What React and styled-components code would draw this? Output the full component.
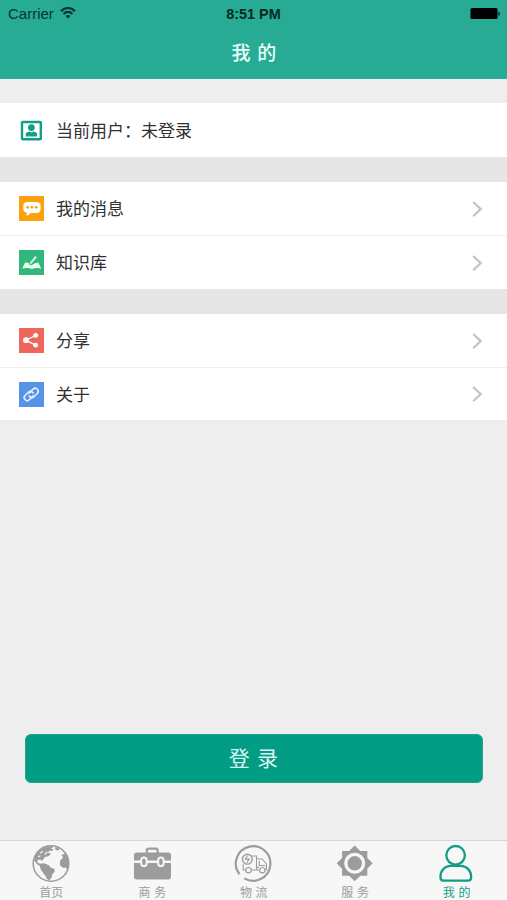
import styled, { createGlobalStyle } from 'styled-components'

const GlobalStyle = createGlobalStyle`
  * {
    box-sizing: border-box;
  }
  body {
    margin: 0;
    background: #eeeeee;
    font-family: "Liberation Sans", "Noto Sans CJK SC", sans-serif;
  }
`

const Screen = styled.div`
  display: flex;
  flex-direction: column;
  width: 100%;
  max-width: 507px;
  height: 900px;
  overflow: hidden;
  background: #eeeeee;
`

const Header = styled.header`
  height: 79px;
  background: #27ab95;
`

const StatusBar = styled.div`
  display: grid;
  grid-template-columns: 1fr auto 1fr;
  align-items: center;
  height: 27px;
  padding: 0 7px 0 8px;
  line-height: 27px;
  color: #06352d;

  svg {
    display: block;
  }
`

const Carrier = styled.div`
  display: flex;
  align-items: center;
  gap: 6px;
  height: 27px;
  font-size: 15px;
  line-height: 28px;

  svg {
    margin-bottom: 2px;
  }
`

const Clock = styled.div`
  padding-right: 1px;
  font-size: 14.4px;
  font-weight: bold;
  line-height: 28px;
  color: #052820;
`

const Battery = styled.div`
  display: flex;
  justify-content: flex-end;
`

const Title = styled.h1`
  margin: 0;
  padding-left: 2px;
  height: 52px;
  font-family: "Noto Sans CJK SC", sans-serif;
  font-size: 19px;
  font-weight: 500;
  line-height: 49px;
  letter-spacing: 1.3px;
  text-align: center;
  color: #e9fffa;
`

const Content = styled.main`
  flex: 1;
  display: flex;
  flex-direction: column;
  padding-top: 24px;
`

const Groups = styled.div`
  display: flex;
  flex-direction: column;
  gap: 25px;
  background: #e6e6e6;
`

const Group = styled.section`
  background: #ffffff;
`

const Row = styled.div`
  display: flex;
  align-items: center;
  height: ${({ $height }) => $height}px;
  padding: 0 24px 0 19px;

  & + & {
    border-top: 1px solid #f0f0f0;
  }
  > svg {
    flex: none;
  }
`

const RowLabel = styled.span`
  flex: 1;
  margin-left: 12px;
  padding-bottom: 2px;
  font-family: "Noto Sans CJK SC", sans-serif;
  font-size: 17px;
  line-height: 25px;
  color: #303030;
`

const LoginButton = styled.button`
  height: 49px;
  margin: auto 24px 57px 25px;
  padding: 0 0 3px;
  border: 1px solid #22a38d;
  border-radius: 6px;
  background: #029d84;
  font-family: "Noto Sans CJK SC", sans-serif;
  font-size: 21px;
  font-weight: 400;
  line-height: 44px;
  letter-spacing: 1.3px;
  color: #d9f7f0;
`

const TabBar = styled.nav`
  display: grid;
  grid-template-columns: repeat(5, 1fr);
  height: 60px;
  border-top: 1px solid #d6d6d6;
  background: #f7f7f7;
`

const Tab = styled.a`
  display: flex;
  flex-direction: column;
  align-items: center;
  padding-top: 3px;
  color: ${({ $active }) => ($active ? '#139d83' : '#9c9c9c')};

  svg {
    display: block;
  }
`

const TabLabel = styled.span`
  height: 18px;
  padding-left: 1px;
  font-family: "Noto Sans CJK SC", sans-serif;
  font-size: 12px;
  line-height: 18px;
  letter-spacing: ${({ $wide }) => ($wide ? '0.5px' : '0')};
  white-space: pre;
`

function WifiIcon() {
  return (
    <svg width="16" height="12" viewBox="0 0 16 12" fill="none" stroke="currentColor" strokeWidth="2.1">
      <path d="M1 4.2C5-.1 11-.1 15 4.2M3.6 7C6.3 4.2 9.7 4.2 12.4 7" />
      <path d="M8 11.5 5.5 8.9q2.5-2 5 0z" fill="currentColor" stroke="none" />
    </svg>
  )
}

function BatteryIcon() {
  return (
    <svg width="30" height="12" viewBox="0 0 30 12">
      <rect x="0.5" y="0" width="27" height="11" rx="1.5" fill="#000" />
      <path d="M28.2 3.7q1.8.2 1.8 2t-1.8 2z" fill="#06352d" />
    </svg>
  )
}

function UserCardIcon() {
  return (
    <svg width="25" height="25" viewBox="0 0 25 25">
      <rect x="3" y="4" width="18.8" height="17.2" rx="0.6" fill="#fff" stroke="#129f86" strokeWidth="2.4" />
      <circle cx="12.4" cy="9.6" r="3.4" fill="#129f86" />
      <path d="M6.7 18.5v-1.7q0-2.6 3.6-3.2l2.1.8 2.1-.8q3.6.6 3.6 3.2v1.7z" fill="#129f86" />
    </svg>
  )
}

function MessageIcon() {
  return (
    <svg width="25" height="25" viewBox="0 0 25 25">
      <path fill="#fba10c" d="M0 0h25v25H0z" />
      <path
        fill="#fff"
        d="M8.7 6h8.6q4.3 0 4.3 4v3q0 4-4.3 4h-5.500q-2 2.500-5 2.600 1.400-1.200 1.200-2.900-3.700-.5-3.700-3.700v-3q0-4 4.400-4z"
      />
      <g fill="#fba10c">
        <circle cx="8.6" cy="11.3" r="1.4" />
        <circle cx="12.9" cy="11.3" r="1.4" />
        <circle cx="17.2" cy="11.3" r="1.4" />
      </g>
    </svg>
  )
}

function KnowledgeIcon() {
  return (
    <svg width="25" height="25" viewBox="0 0 25 25">
      <path fill="#33b67a" d="M0 0h25v25H0z" />
      <path
        fill="#e4fff1"
        d="m6 12.400 3.200.4 3.100 2.700 3-2 4-1 2.900 5.900q-5.700-1.300-9.400.7-3.800-2-9.500-.7z"
      />
      <path d="m9.900 15.300 1.500-3.500 4.900-6 1.700 1.400-5 6z" fill="#e4fff1" stroke="#33b67a" strokeWidth="0.5" />
    </svg>
  )
}

function ShareIcon() {
  return (
    <svg width="25" height="25" viewBox="0 0 25 25">
      <path fill="#ee675c" d="M0 0h25v25H0z" />
      <path d="M16.700 7.500 6.700 12.200l10 5" fill="none" stroke="#fff" strokeWidth="1.3" />
      <g fill="#fff">
        <circle cx="7" cy="12.2" r="2.9" />
        <circle cx="16.7" cy="7.4" r="2.4" />
        <circle cx="16.7" cy="17.2" r="2.4" />
      </g>
    </svg>
  )
}

function AboutIcon() {
  return (
    <svg width="25" height="25" viewBox="0 0 25 25">
      <path fill="#5692e8" d="M0 0h25v25H0z" />
      <g transform="rotate(-45 12.2 12.5)" fill="none" stroke="#e5f0ff" strokeWidth="1.6" strokeLinecap="round">
        <path d="M12.700 14.900H7.200a3 3 0 0 1 0-6h4.500a3 3 0 0 1 2.900 4" />
        <path d="M11.700 10.100h5.500a3 3 0 0 1 0 6h-4.500a3 3 0 0 1-2.900-4" />
      </g>
    </svg>
  )
}

function Chevron() {
  return (
    <svg width="12" height="18" viewBox="0 0 12 18" fill="none" stroke="#c3c3c3" strokeWidth="2.2">
      <path d="m2.200 2 7.500 7.100-7.500 7.100" />
    </svg>
  )
}

function HomeIcon() {
  return (
    <svg width="40" height="39" viewBox="0 0 40 39">
      <circle cx="20" cy="19.5" r="17.8" fill="none" stroke="currentColor" strokeWidth="1.5" />
      <g fill="currentColor">
        <path d="M3 15C5.500 8 11 3 19 2.200l4 .6-3 1.700 2.500.8-2 1.900-2-.8-1.500 2.300 3 .8-2.500 2.800-3.500.8-3 3.800-1.800-1.500-2.500.7-.3 2.500 2.700 1.500.8 2-3.400-1.300L3.500 17z" />
        <path d="m8 19.800 5-.5 5 2 1.500 2.300 3.700 1.200.6 2.700-2.600 2.900-.8 3.600-2.400 2.300q-2.500-1.200-3.700-4.600L10 26z" />
        <path d="m30.500 5.500 3.500 4-3.600 1.400 1.700 2.600-2.900 3-.4 4.500 3 2.700 3.200-.3 1 2.300C38.800 22 39 14.500 35.500 9.500z" />
        <path d="m24.500 3 4.500 2-2 1.500-3-1z" />
      </g>
      <path d="m9 9 3-1.400m1.800 2.900 2.700-2.700M7 12.700l2.500-1" stroke="#f7f7f7" strokeWidth="1.1" />
    </svg>
  )
}

function BusinessIcon() {
  return (
    <svg width="40" height="39" viewBox="0 0 40 39">
      <path d="M14.800 9V6.400q0-1.700 1.700-1.700h7.400q1.700 0 1.700 1.700V9" fill="none" stroke="currentColor" strokeWidth="2.2" />
      <path
        fill="currentColor"
        d="M4.500 8.500h32q2.500 0 2.500 2.500v5.600H2V11q0-2.500 2.500-2.500zM2 19h37v13.500q0 3-3 3H5q-3 0-3-3z"
      />
      <g fill="currentColor" stroke="#f7f7f7" strokeWidth="2">
        <rect x="9.2" y="13.5" width="5.4" height="8.6" rx="2.7" />
        <rect x="26.2" y="13.5" width="5.4" height="8.6" rx="2.7" />
      </g>
    </svg>
  )
}

function LogisticsIcon() {
  return (
    <svg width="40" height="39" viewBox="0 0 40 39" fill="none" stroke="currentColor">
      <path d="M11.300 34.400A17.300 17.300 0 1 0 6.500 30.200" strokeWidth="2.2" />
      <g strokeWidth="1.1">
        <path d="M16 12h7.500v14H18m-5 0h-2.800V20M23.500 15h5.700l4.300 5v6h-1.600m-5 0H18" />
        <path d="M26.300 17v4.500h6M24 23.300h2" />
        <circle cx="15.5" cy="26.2" r="2.7" fill="#f7f7f7" />
        <circle cx="29.3" cy="26.2" r="2.7" fill="#f7f7f7" />
        <circle cx="14.3" cy="15.2" r="4.9" fill="#f7f7f7" strokeWidth="1.4" />
        <path d="m14.800 11.500-2.600 3.600h4l-2.300 3.500" />
      </g>
    </svg>
  )
}

function ServiceIcon() {
  return (
    <svg width="40" height="39" viewBox="0 0 40 39">
      <path
        fill="currentColor"
        d="m19.700 1.600 5.600 5.300h7v7l5.400 5.400-5.400 5.400v7h-7l-5.600 5.500-5.600-5.500h-7v-7l-5.400-5.400 5.400-5.400v-7h7z"
      />
      <circle cx="19.7" cy="19.3" r="8.9" fill="currentColor" stroke="#f7f7f7" strokeWidth="3.3" />
    </svg>
  )
}

function MineIcon() {
  return (
    <svg width="40" height="39" viewBox="0 0 40 39" fill="none" stroke="currentColor" strokeWidth="2.3">
      <circle cx="19.6" cy="11.3" r="9.3" />
      <path d="M14.500 21.900h10.300c6 0 10.300 5 10.300 10.500v1.300q0 2.900-3 2.900H7.500q-3 0-3-2.900v-1.300c0-5.500 4.300-10.500 10-10.500z" />
    </svg>
  )
}

const groups = [
  [{ label: '当前用户：未登录', icon: UserCardIcon, height: 54 }],
  [
    { label: '我的消息', icon: MessageIcon, height: 53, link: true },
    { label: '知识库', icon: KnowledgeIcon, height: 54, link: true },
  ],
  [
    { label: '分享', icon: ShareIcon, height: 53, link: true },
    { label: '关于', icon: AboutIcon, height: 53, link: true },
  ],
]

const tabs = [
  { label: '首页', icon: HomeIcon },
  { label: '商 务', icon: BusinessIcon, wide: true },
  { label: '物 流', icon: LogisticsIcon, wide: true },
  { label: '服 务', icon: ServiceIcon, wide: true },
  { label: '我 的', icon: MineIcon, wide: true, active: true },
]

export default function App() {
  return (
    <Screen>
      <GlobalStyle />
      <Header>
        <StatusBar>
          <Carrier>
            Carrier
            <WifiIcon />
          </Carrier>
          <Clock>8:51 PM</Clock>
          <Battery>
            <BatteryIcon />
          </Battery>
        </StatusBar>
        <Title>我 的</Title>
      </Header>
      <Content>
        <Groups>
          {groups.map((rows, i) => (
            <Group key={i}>
              {rows.map(({ label, icon: Icon, height, link }) => (
                <Row key={label} $height={height}>
                  <Icon />
                  <RowLabel>{label}</RowLabel>
                  {link && <Chevron />}
                </Row>
              ))}
            </Group>
          ))}
        </Groups>
        <LoginButton type="button">登 录</LoginButton>
      </Content>
      <TabBar>
        {tabs.map(({ label, icon: Icon, wide, active }) => (
          <Tab key={label} $active={active}>
            <Icon />
            <TabLabel $wide={wide}>{label}</TabLabel>
          </Tab>
        ))}
      </TabBar>
    </Screen>
  )
}
